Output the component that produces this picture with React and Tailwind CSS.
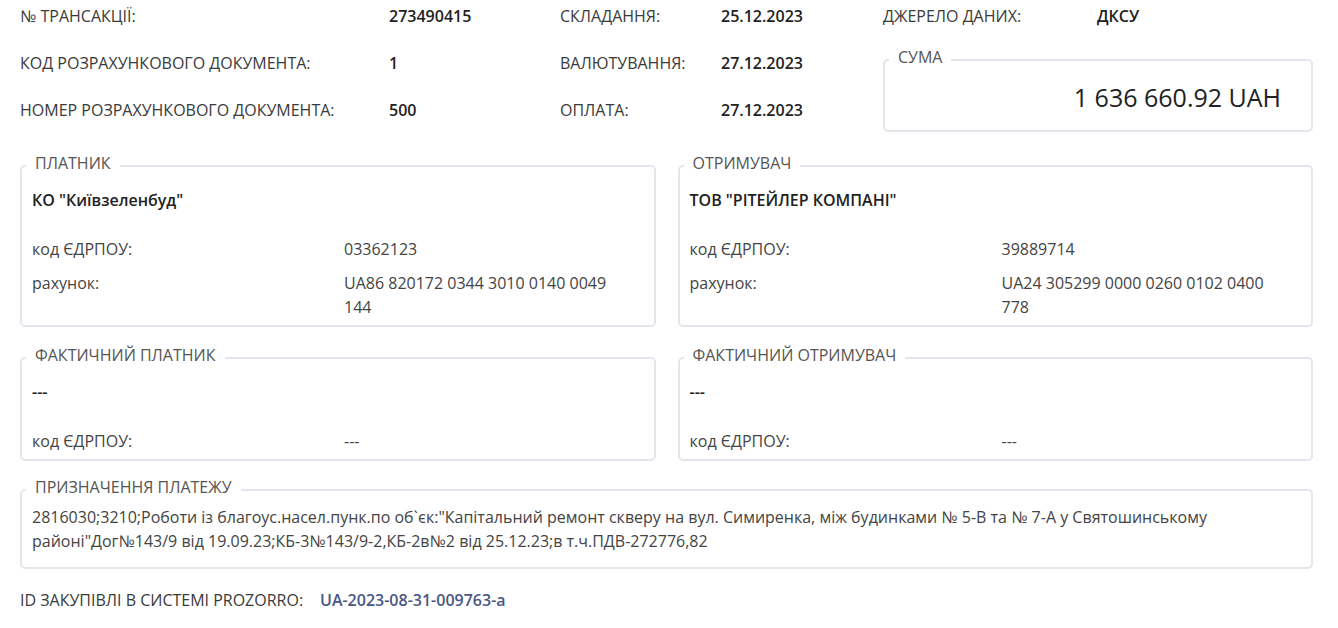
const font = { fontFamily: '"Open Sans", "Noto Sans", sans-serif' };

function Box({ title, className = "", children }) {
  return (
    <fieldset
      className={`border-2 border-[#e3e6ec] rounded-[5px] px-[10px] min-w-0 ${className}`}
    >
      <legend className="ml-[-6px] px-[9px] pb-[6px] text-[16px] leading-[20px] text-[#555]">
        {title}
      </legend>
      {children}
    </fieldset>
  );
}

function Party({ title, name, code, account }) {
  return (
    <Box title={title} className="pt-[9px] pb-[6px]">
      <p className="text-[16px] leading-[24px] font-semibold text-[#222]">{name}</p>
      <div className="grid grid-cols-[312px_280px] mt-[25px] gap-y-[10px] text-[16px] leading-[24px] text-[#444]">
        <span>код ЄДРПОУ:</span>
        <span>{code}</span>
        {account && (
          <>
            <span>рахунок:</span>
            <span>{account}</span>
          </>
        )}
      </div>
    </Box>
  );
}

export default function App() {
  const top = [
    ["№ ТРАНСАКЦІЇ:", "273490415", "СКЛАДАННЯ:", "25.12.2023"],
    ["КОД РОЗРАХУНКОВОГО ДОКУМЕНТА:", "1", "ВАЛЮТУВАННЯ:", "27.12.2023"],
    ["НОМЕР РОЗРАХУНКОВОГО ДОКУМЕНТА:", "500", "ОПЛАТА:", "27.12.2023"],
  ];

  return (
    <div className="min-h-screen bg-white pl-[20px] pr-[25px] pt-[4px] text-[#333]" style={font}>
      {/* Header */}
      <div className="flex items-start">
        <div className="grid grid-cols-[369px_171px_161px_162px] content-start gap-y-[23px] text-[16px] leading-[24px]">
          {top.map((r) => (
            <div key={r[0]} className="contents">
              <span className="text-[#3a3a3a]">{r[0]}</span>
              <span className="font-semibold text-[#222]">{r[1]}</span>
              <span className="text-[#3a3a3a]">{r[2]}</span>
              <span className="font-semibold text-[#222]">{r[3]}</span>
            </div>
          ))}
        </div>
        <div className="flex-1 flex flex-col">
          <div className="flex text-[16px] leading-[24px]">
            <span className="w-[214px] text-[#3a3a3a]">ДЖЕРЕЛО ДАНИХ:</span>
            <span className="font-semibold text-[#222]">ДКСУ</span>
          </div>
          <Box title="СУМА" className="mt-[19px] pr-[30px] pt-[7px] pb-[16px]">
            <p className="text-right text-[25px] leading-[34px] text-[#222]">1 636 660.92 UAH</p>
          </Box>
        </div>
      </div>

      {/* Parties */}
      <div className="grid grid-cols-2 gap-x-[22px] mt-[21px]">
        <Party
          title="ПЛАТНИК"
          name={'КО "Київзеленбуд"'}
          code="03362123"
          account="UA86 820172 0344 3010 0140 0049 144"
        />
        <Party
          title="ОТРИМУВАЧ"
          name={'ТОВ "РІТЕЙЛЕР КОМПАНІ"'}
          code="39889714"
          account="UA24 305299 0000 0260 0102 0400 778"
        />
      </div>

      <div className="grid grid-cols-2 gap-x-[22px] mt-[18px]">
        <Party title="ФАКТИЧНИЙ ПЛАТНИК" name="---" code="---" />
        <Party title="ФАКТИЧНИЙ ОТРИМУВАЧ" name="---" code="---" />
      </div>

      {/* Purpose */}
      <Box title="ПРИЗНАЧЕННЯ ПЛАТЕЖУ" className="mt-[16px] pt-[2px] pb-[14px]">
        <p className="text-[16px] leading-[24px] text-[#444]">
          2816030;3210;Роботи із благоус.насел.пунк.по об`єк:"Капітальний ремонт скверу на вул. Симиренка, між будинками № 5-В та № 7-А у Святошинському районі"Дог№143/9 від 19.09.23;КБ-3№143/9-2,КБ-2в№2 від 25.12.23;в т.ч.ПДВ-272776,82
        </p>
      </Box>

      {/* Prozorro */}
      <div className="flex mt-[19px] text-[16px] leading-[24px]">
        <span className="w-[300px] text-[#3a3a3a]">ID ЗАКУПІВЛІ В СИСТЕМІ PROZORRO:</span>
        <a className="font-semibold text-[#4a5785]">UA-2023-08-31-009763-a</a>
      </div>
    </div>
  );
}
